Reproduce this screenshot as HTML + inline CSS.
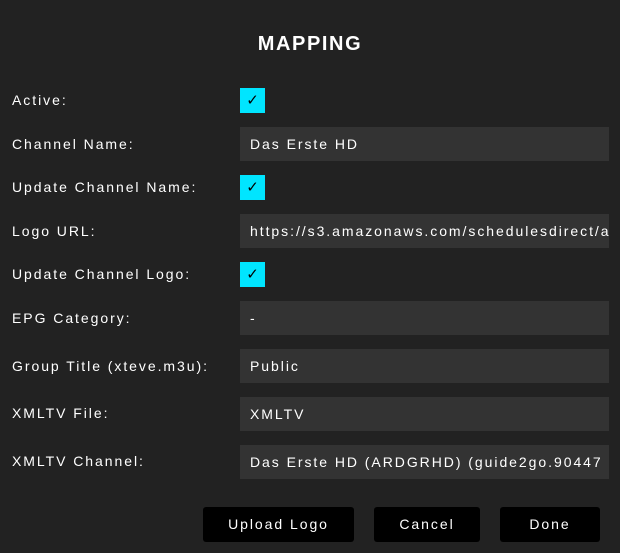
<!DOCTYPE html>
<html><head><style>
body{margin:0;width:620px;height:553px;background:#222;font-family:"Liberation Sans",Arial,sans-serif;color:#fff;position:relative;overflow:hidden}
h1{position:absolute;top:33px;left:0;width:620px;text-align:center;margin:0;font-size:20px;font-weight:bold;letter-spacing:1.6px}
.l{position:absolute;left:12px;font-size:14px;letter-spacing:1.95px;line-height:20px}
.i{position:absolute;left:240px;width:369px;height:34px;background:#333;font-size:14px;letter-spacing:1.95px;line-height:34px;padding-left:10px;box-sizing:border-box;white-space:nowrap;overflow:hidden}
.c{position:absolute;left:240px;width:25px;height:25px;background:#00e5ff;color:#000;font-size:15px;text-align:center;line-height:25px}
.b{position:absolute;top:507px;height:35px;background:#000;border-radius:3px;font-size:14px;letter-spacing:1.95px;line-height:35px;text-align:center}
</style></head><body>
<h1>MAPPING</h1>
<div class="l" style="top:90px">Active:</div><div class="c" style="top:88px">✓</div>
<div class="l" style="top:134px">Channel Name:</div><div class="i" style="top:127px">Das Erste HD</div>
<div class="l" style="top:177px">Update Channel Name:</div><div class="c" style="top:175px">✓</div>
<div class="l" style="top:221px">Logo URL:</div><div class="i" style="top:214px">https://s3.amazonaws.com/schedulesdirect/assets</div>
<div class="l" style="top:264px">Update Channel Logo:</div><div class="c" style="top:262px">✓</div>
<div class="l" style="top:308px">EPG Category:</div><div class="i" style="top:301px">-</div>
<div class="l" style="top:356px">Group Title (xteve.m3u):</div><div class="i" style="top:349px">Public</div>
<div class="l" style="top:403px">XMLTV File:</div><div class="i" style="top:397px">XMLTV</div>
<div class="l" style="top:451px">XMLTV Channel:</div><div class="i" style="top:445px">Das Erste HD (ARDGRHD) (guide2go.90447</div>
<div class="b" style="left:203px;width:151px">Upload Logo</div>
<div class="b" style="left:374px;width:106px">Cancel</div>
<div class="b" style="left:500px;width:100px">Done</div>
</body></html>
